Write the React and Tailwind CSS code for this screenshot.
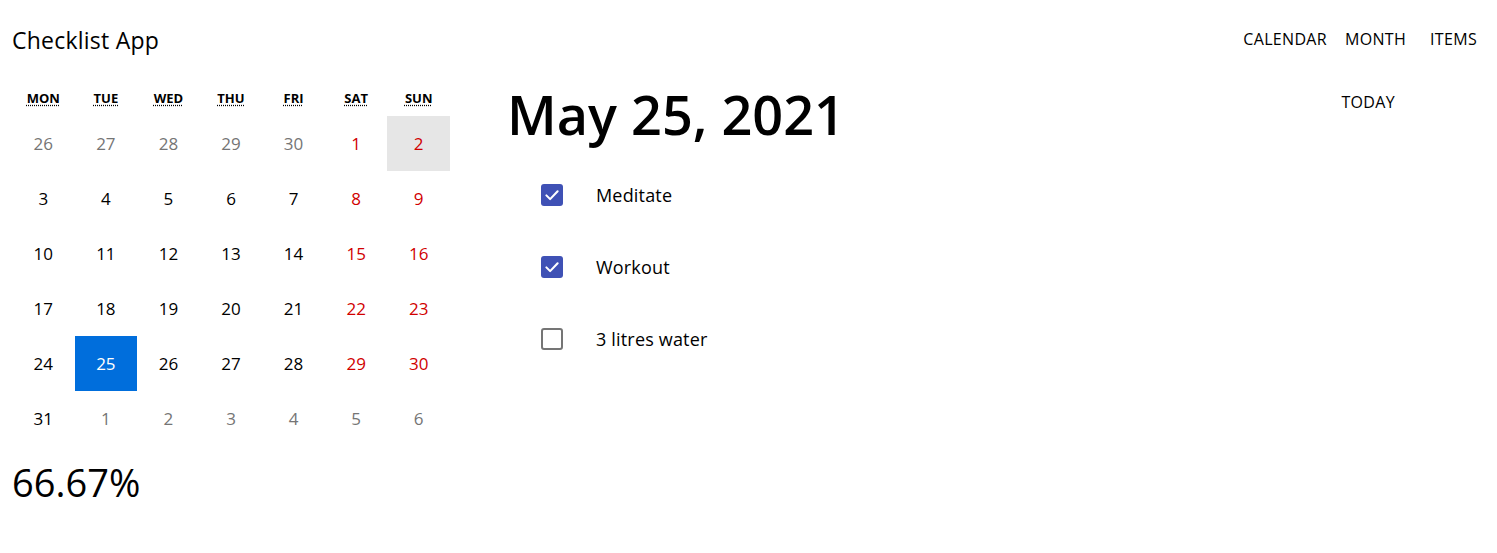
import { useState } from 'react';

const weekdays = [
  ['MON', 'Monday'],
  ['TUE', 'Tuesday'],
  ['WED', 'Wednesday'],
  ['THU', 'Thursday'],
  ['FRI', 'Friday'],
  ['SAT', 'Saturday'],
  ['SUN', 'Sunday'],
];

// May 2021 grid, Monday first
const days = [
  [26, 'prev'], [27, 'prev'], [28, 'prev'], [29, 'prev'], [30, 'prev'], [1, 'cur'], [2, 'cur'],
  [3, 'cur'], [4, 'cur'], [5, 'cur'], [6, 'cur'], [7, 'cur'], [8, 'cur'], [9, 'cur'],
  [10, 'cur'], [11, 'cur'], [12, 'cur'], [13, 'cur'], [14, 'cur'], [15, 'cur'], [16, 'cur'],
  [17, 'cur'], [18, 'cur'], [19, 'cur'], [20, 'cur'], [21, 'cur'], [22, 'cur'], [23, 'cur'],
  [24, 'cur'], [25, 'cur'], [26, 'cur'], [27, 'cur'], [28, 'cur'], [29, 'cur'], [30, 'cur'],
  [31, 'cur'], [1, 'next'], [2, 'next'], [3, 'next'], [4, 'next'], [5, 'next'], [6, 'next'],
];

function Checkbox({ checked, onChange }) {
  return (
    <button
      onClick={onChange}
      className={
        checked
          ? 'w-[22px] h-[22px] rounded-[3px] bg-[#3f51b5] flex items-center justify-center'
          : 'w-[22px] h-[22px] rounded-[3px] border-2 border-[#757575] bg-white'
      }
    >
      {checked && (
        <svg width="18" height="18" viewBox="0 0 24 24" fill="none">
          <path d="M4.5 12.5l5 5L19.5 7" stroke="white" strokeWidth="2.8" strokeLinecap="round" strokeLinejoin="round" />
        </svg>
      )}
    </button>
  );
}

export default function App() {
  const [items, setItems] = useState([
    { name: 'Meditate', done: true },
    { name: 'Workout', done: true },
    { name: '3 litres water', done: false },
  ]);

  const toggle = (i) =>
    setItems(items.map((it, j) => (j === i ? { ...it, done: !it.done } : it)));

  const pct = ((items.filter((i) => i.done).length / items.length) * 100).toFixed(2);

  return (
    <div className="min-h-screen bg-white text-black font-['Open_Sans',sans-serif]">
      {/* Header */}
      <header className="flex items-center justify-between h-[78px] pl-[12px] pr-[20px]">
        <h1 className="text-[23px] font-medium tracking-[0.01em] mt-[2px]">Checklist App</h1>
        <nav className="flex items-center text-[16px] tracking-[0.02em]">
          <button className="uppercase">Calendar</button>
          <button className="uppercase ml-[18px]">Month</button>
          <button className="uppercase ml-[24px]">Items</button>
        </nav>
      </header>

      <main className="flex">
        {/* Left: calendar + progress */}
        <section className="w-[438px] ml-[12px] shrink-0">
          <div className="grid grid-cols-7 h-[38px] pt-[3px] items-center text-[13px] font-bold text-center">
            {weekdays.map(([s, l]) => (
              <abbr key={s} title={l} className="underline decoration-dotted underline-offset-2">
                {s}
              </abbr>
            ))}
          </div>
          <div className="grid grid-cols-7 text-[17px] font-medium">
            {days.map(([d, kind], i) => {
              const col = i % 7;
              const isToday = kind === 'cur' && d === 25;
              const isHover = i === 6;
              let color = 'text-black';
              if (kind !== 'cur') color = 'text-[#757575]';
              else if (col >= 5) color = 'text-[#d10000]';
              if (isToday) color = 'text-white';
              const bg = isToday ? 'bg-[#006edc]' : isHover ? 'bg-[#e6e6e6]' : '';
              return (
                <button key={i} className={`h-[55px] flex items-center justify-center ${color} ${bg}`}>
                  {d}
                </button>
              );
            })}
          </div>
          <div className="text-[38px] font-medium mt-[8px]">{pct}%</div>
        </section>

        {/* Right: day view */}
        <section className="flex-1 pl-[57px] pr-[102px]">
          <div className="flex items-start justify-between">
            <h2 className="text-[54px] font-semibold leading-none mt-[9px]">May 25, 2021</h2>
            <button className="text-[16px] uppercase mt-[12px] tracking-[0.02em]">Today</button>
          </div>
          <ul className="mt-[43px] ml-[34px] flex flex-col gap-[50px]">
            {items.map((it, i) => (
              <li key={it.name} className="flex items-center gap-[33px] h-[22px]">
                <Checkbox checked={it.done} onChange={() => toggle(i)} />
                <span className="text-[18px] font-medium tracking-[0.01em]">{it.name}</span>
              </li>
            ))}
          </ul>
        </section>
      </main>
    </div>
  );
}
